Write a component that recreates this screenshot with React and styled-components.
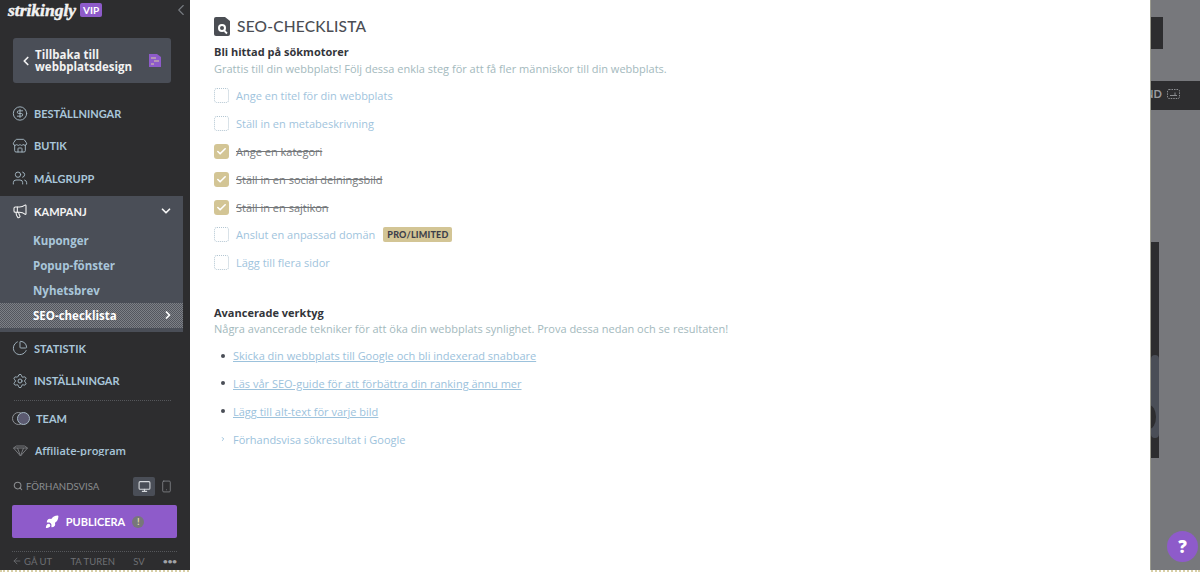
import styled, { createGlobalStyle } from 'styled-components'
import {
  ArrowLeft, ChartPie, Check, ChevronDown, ChevronLeft, ChevronRight, CircleDollarSign,
  Megaphone, Monitor, Rocket, Search, Settings, Smartphone, Store, Users,
} from 'lucide-react'

const GlobalStyle = createGlobalStyle`
html, body {
  margin: 0;
  padding: 0;
  height: 572px;
  overflow: hidden;
  background: #fff;
}
`

const Page = styled.div`
display: flex;
width: 1200px;
height: 570px;
border-bottom: 2px dotted #d8cfa6;
font-family: "Open Sans", "Liberation Sans", sans-serif;
`

const Sidebar = styled.aside`
display: flex;
flex-direction: column;
width: 190px;
height: 570px;
flex-shrink: 0;
background: #2d2d2f;
color: #a9c6da;
`

const Logo = styled.div`
display: flex;
align-items: center;
height: 20px;
padding: 0 0 0 8px;
`

const LogoText = styled.span`
font-family: "Liberation Serif", serif;
font-weight: 700;
font-style: italic;
font-size: 17.5px;
color: #f2f2f2;
-webkit-text-stroke: 0.5px #f2f2f2;
width: 72px;
`

const VipBadge = styled.span`
font-family: "Lato", sans-serif;
font-size: 10px;
font-weight: 700;
color: #fff;
background: #8e5bca;
border-radius: 2px;
padding: 1px 3px;
`

const Collapse = styled.span`
display: flex;
margin-left: auto;
color: #777b80;
`

const BackButton = styled.button`
display: flex;
align-items: center;
width: 158px;
height: 45px;
margin: 18px 0 0 13px;
padding: 0 10px 0 6px;
border: 0;
border-radius: 3px;
background: #4a4e57;
color: #f2f2f2;
font-family: "Open Sans", sans-serif;
font-weight: 700;
font-size: 11.5px;
line-height: 11.5px;
text-align: left;
`

const BackLabel = styled.span`
margin-left: 2px;
flex: 1;
`

const NavScroll = styled.nav`
display: flex;
flex-direction: column;
height: 359px;
margin-top: 14px;
overflow: hidden;
`

const NavItem = styled.div`
display: flex;
align-items: center;
flex-shrink: 0;
height: ${p => p.$h || 32.5}px;
padding-left: 12px;
gap: 6px;
font-family: "Lato", sans-serif;
font-weight: 700;
font-size: 11px;
color: ${p => p.$light ? '#f4f4f4' : '#a9c6da'};
`

const IconSlot = styled.span`
display: flex;
justify-content: center;
width: 16px;
color: ${p => p.$light ? '#f4f4f4' : '#a6b8c4'};
`

const Campaign = styled.div`
display: flex;
flex-direction: column;
flex-shrink: 0;
width: 183px;
height: 136px;
margin-top: 1.5px;
background: #4a4e57;
`

const CampaignHead = styled(NavItem)`
margin-bottom: 1.5px;
`

const CampaignChevron = styled.span`
display: flex;
margin-left: auto;
margin-right: 10px;
`

const SubItem = styled.div`
display: flex;
align-items: center;
flex-shrink: 0;
height: 25px;
padding: 0 9px 0 33px;
font-weight: 700;
font-size: 11.5px;
color: ${p => p.$active ? '#fff' : '#a9c6da'};
background: ${p => p.$active ? 'repeating-conic-gradient(#53565e 0 25%, #7d8086 0 50%) 0 0 / 2px 2px' : 'transparent'};
justify-content: space-between;
`

const Divider = styled.div`
flex-shrink: 0;
width: 157px;
margin: 3px 0 1px 14px;
border-top: 1px dotted #55575b;
`

const AffiliateLabel = styled.span`
font-family: "Open Sans", sans-serif;
font-weight: 600;
`

const PreviewRow = styled.div`
display: flex;
align-items: center;
height: 24px;
margin-top: 18px;
padding-left: 13px;
font-family: "Lato", sans-serif;
font-size: 9.6px;
color: #8b8d90;
`

const PreviewLabel = styled.span`
margin-left: 3px;
flex: 1;
`

const DeviceButton = styled.span`
display: flex;
align-items: center;
justify-content: center;
width: 22px;
height: 19px;
margin-right: ${p => p.$last ? '13px' : '0'};
border-radius: 2px;
background: ${p => p.$active ? '#4a4e57' : 'transparent'};
color: ${p => p.$active ? '#d5d8dc' : '#85888c'};
`

const PublishButton = styled.button`
display: flex;
align-items: center;
justify-content: center;
gap: 7px;
width: 165px;
height: 33px;
margin: 7px 0 0 12px;
padding: 0;
border: 0;
border-radius: 2px;
background: #8e5bca;
color: #fff;
font-family: "Lato", sans-serif;
font-weight: 700;
font-size: 11px;
`

const Warning = styled.span`
display: flex;
align-items: center;
justify-content: center;
width: 12px;
height: 12px;
border-radius: 50%;
background: #77777a;
color: #e6dca8;
font-size: 9px;
font-weight: 700;
`

const BottomBar = styled.div`
display: flex;
align-items: center;
justify-content: space-between;
height: 18px;
margin: 13px 13px 0 12px;
border-top: 1px dotted #55575b;
font-family: "Lato", sans-serif;
font-size: 9.5px;
color: #6e7074;
`

const BackOut = styled.span`
display: flex;
align-items: center;
gap: 2px;
`

const Dots = styled.span`
font-weight: 900;
font-size: 8px;
color: #a0a2a6;
`

const Modal = styled.main`
width: 936px;
height: 570px;
padding: 13px 0 0 24px;
flex-shrink: 0;
background: #fff;
`

const TitleRow = styled.div`
display: flex;
align-items: center;
gap: 7px;
height: 26px;
`

const Title = styled.h1`
margin: 0;
font-family: "Lato", sans-serif;
font-weight: 500;
font-size: 15.5px;
letter-spacing: 0.2px;
color: #4b4e54;
`

const SectionTitle = styled.h2`
margin: ${p => p.$top || 0}px 0 0;
font-size: 11px;
line-height: 17px;
font-weight: 700;
color: #33353a;
`

const SectionText = styled.p`
margin: 0;
font-size: 11px;
line-height: ${p => p.$lh || 17}px;
color: #a3b9bd;
`

const CheckList = styled.ul`
display: flex;
flex-direction: column;
margin: 5px 0 0;
padding: 0;
list-style: none;
`

const CheckRow = styled.li`
display: flex;
align-items: center;
height: 27.8px;
gap: 7px;
font-size: 11px;
color: ${p => p.$done ? '#74777a' : '#9fc4dd'};
text-decoration: ${p => p.$done ? 'line-through' : 'none'};
`

const CheckBox = styled.span`
display: flex;
align-items: center;
justify-content: center;
width: 15px;
height: 15px;
box-sizing: border-box;
border-radius: 3px;
border: ${p => p.$done ? '0' : '1px dotted #b3c6d2'};
background: ${p => p.$done ? '#d3c595' : 'transparent'};
color: #fff;
`

const ProBadge = styled.span`
margin-left: 1px;
padding: 2px 4px;
border-radius: 2px;
background: #d3c595;
color: #3d3f4a;
font-family: "Lato", sans-serif;
font-size: 9px;
line-height: 11px;
font-weight: 900;
letter-spacing: 0.2px;
`

const ToolList = styled.ul`
display: flex;
flex-direction: column;
margin: 5px 0 0;
padding: 0;
list-style: none;
`

const ToolRow = styled.li`
display: flex;
align-items: center;
height: 27.9px;
padding-left: 6px;
gap: 7px;
font-size: 11px;
color: #9cc2dc;
`

const Bullet = styled.span`
width: 4px;
height: 4px;
margin: 0 1px;
border-radius: 50%;
background: #4a4e57;
`

const ToolLink = styled.a`
color: #9cc2dc;
text-decoration: underline;
`

const ToolChevron = styled.span`
display: flex;
width: 6px;
color: #9cc2dc;
`

const Backdrop = styled.div`
position: relative;
flex: 1;
border-left: 1px solid #9a9a8e;
background: #77787c;
`

const Block = styled.div`
position: absolute;
left: 0;
top: ${p => p.$top}px;
width: ${p => p.$w}px;
height: ${p => p.$h}px;
overflow: hidden;
border-radius: ${p => p.$round || 0}px;
background: ${p => p.$bg || '#2d2d2f'};
`

const CutLabel = styled.span`
position: absolute;
left: -6px;
top: 6px;
display: flex;
align-items: center;
gap: 5px;
font-family: "Lato", sans-serif;
font-weight: 700;
font-size: 11px;
color: #9a9ca0;
`

const DarkArc = styled.div`
position: absolute;
left: -9px;
top: 50px;
width: 14px;
height: 24px;
border-radius: 50%;
background: #2d2d2f;
`

const HelpButton = styled.button`
position: absolute;
left: 16px;
top: 531px;
width: 31px;
height: 31px;
padding: 0;
border: 0;
border-radius: 50%;
background: #8e5bca;
color: #fff;
font-family: "Open Sans", sans-serif;
font-weight: 800;
font-size: 17px;
`

const checklist = [
  { text: 'Ange en titel för din webbplats' },
  { text: 'Ställ in en metabeskrivning' },
  { text: 'Ange en kategori', done: true },
  { text: 'Ställ in en social delningsbild', done: true },
  { text: 'Ställ in en sajtikon', done: true },
  { text: 'Anslut en anpassad domän', badge: 'PRO/LIMITED' },
  { text: 'Lägg till flera sidor' },
]

const tools = [
  'Skicka din webbplats till Google och bli indexerad snabbare',
  'Läs vår SEO-guide för att förbättra din ranking ännu mer',
  'Lägg till alt-text för varje bild',
]

const SeoIcon = () => (
  <svg width="16" height="19" viewBox="0 0 16 19">
    <path d="M0 2q0-2 2-2h9l5 4v13q0 2-2 2H2q-2 0-2-2z" fill="#4b4e54" />
    <circle cx="8" cy="11" r="4" fill="#fff" />
    <circle cx="8" cy="11" r="2" fill="#4b4e54" />
    <path d="M10.5 14l2.5 2.5" stroke="#fff" strokeWidth="1.8" />
  </svg>
)

const DesignIcon = () => (
  <svg width="12" height="13" viewBox="0 0 12 13">
    <path d="M0 0h8l4 3v10H0z" fill="#8e5bca" />
    <path d="M2 4h5M5 7h5M2 10h3" stroke="#d9d0a0" strokeWidth="1" />
  </svg>
)

const TeamIcon = () => (
  <svg width="18" height="13" viewBox="0 0 18 13" fill="none">
    <circle cx="6.5" cy="6.5" r="6" stroke="#8d9096" />
    <circle cx="11.5" cy="6.5" r="6" fill="#5b5a70" stroke="#a6b8c4" />
  </svg>
)

const AffiliateIcon = () => (
  <svg width="17" height="12" viewBox="0 0 16 12" fill="none" stroke="#77797d">
    <path d="M1 3l3-2h8l3 2-7 8zM1 3h14M5 3l3 8 3-8" />
  </svg>
)

const TrayIcon = () => (
  <svg width="13" height="10" viewBox="0 0 13 10" fill="none" stroke="#8b8d90">
    <rect x="0.5" y="0.5" width="12" height="9" rx="1.5" strokeDasharray="1.5 1" />
    <path d="M3 6.5h7M8 3.5v3" />
  </svg>
)

const App = () => {
  return (
    <Page>
      <GlobalStyle />
      <Sidebar>
        <Logo>
          <LogoText>strikingly</LogoText>
          <VipBadge>VIP</VipBadge>
          <Collapse><ChevronLeft size={18} strokeWidth={1.5} /></Collapse>
        </Logo>
        <BackButton>
          <ChevronLeft size={14} strokeWidth={3} />
          <BackLabel>Tillbaka till webbplatsdesign</BackLabel>
          <DesignIcon />
        </BackButton>
        <NavScroll>
          <NavItem><IconSlot><CircleDollarSign size={17} strokeWidth={1.4} /></IconSlot>BESTÄLLNINGAR</NavItem>
          <NavItem><IconSlot><Store size={16} strokeWidth={1.4} /></IconSlot>BUTIK</NavItem>
          <NavItem><IconSlot><Users size={16} strokeWidth={1.4} /></IconSlot>MÅLGRUPP</NavItem>
          <Campaign>
            <CampaignHead $light $h={30}>
              <IconSlot $light><Megaphone size={16} strokeWidth={1.6} /></IconSlot>
              KAMPANJ
              <CampaignChevron><ChevronDown size={14} strokeWidth={3} /></CampaignChevron>
            </CampaignHead>
            <SubItem>Kuponger</SubItem>
            <SubItem>Popup-fönster</SubItem>
            <SubItem>Nyhetsbrev</SubItem>
            <SubItem $active>SEO-checklista<ChevronRight size={12} strokeWidth={3.5} /></SubItem>
          </Campaign>
          <NavItem><IconSlot><ChartPie size={16} strokeWidth={1.4} /></IconSlot>STATISTIK</NavItem>
          <NavItem><IconSlot><Settings size={16} strokeWidth={1.4} /></IconSlot>INSTÄLLNINGAR</NavItem>
          <Divider />
          <NavItem>
            <TeamIcon />
            TEAM
          </NavItem>
          <NavItem>
            <AffiliateIcon />
            <AffiliateLabel>Affiliate-program</AffiliateLabel>
          </NavItem>
        </NavScroll>
        <PreviewRow>
          <Search size={10} strokeWidth={2.5} />
          <PreviewLabel>FÖRHANDSVISA</PreviewLabel>
          <DeviceButton $active><Monitor size={13} strokeWidth={2} /></DeviceButton>
          <DeviceButton $last><Smartphone size={13} strokeWidth={1.5} /></DeviceButton>
        </PreviewRow>
        <PublishButton>
          <Rocket size={14} fill="#fff" />
          PUBLICERA
          <Warning>!</Warning>
        </PublishButton>
        <BottomBar>
          <BackOut><ArrowLeft size={10} />GÅ UT</BackOut>
          <span>TA TUREN</span>
          <span>SV</span>
          <Dots>•••</Dots>
        </BottomBar>
      </Sidebar>
      <Modal>
        <TitleRow>
          <SeoIcon />
          <Title>SEO-CHECKLISTA</Title>
        </TitleRow>
        <SectionTitle $top={4}>Bli hittad på sökmotorer</SectionTitle>
        <SectionText>Grattis till din webbplats! Följ dessa enkla steg för att få fler människor till din webbplats.</SectionText>
        <CheckList>
          {checklist.map(item => (
            <CheckRow key={item.text} $done={item.done}>
              <CheckBox $done={item.done}>{item.done && <Check size={11} strokeWidth={3.5} />}</CheckBox>
              {item.text}
              {item.badge && <ProBadge>{item.badge}</ProBadge>}
            </CheckRow>
          ))}
        </CheckList>
        <SectionTitle $top={27}>Avancerade verktyg</SectionTitle>
        <SectionText $lh={16}>Några avancerade tekniker för att öka din webbplats synlighet. Prova dessa nedan och se resultaten!</SectionText>
        <ToolList>
          {tools.map(tool => (
            <ToolRow key={tool}>
              <Bullet />
              <ToolLink>{tool}</ToolLink>
            </ToolRow>
          ))}
          <ToolRow>
            <ToolChevron><ChevronRight size={10} strokeWidth={4} /></ToolChevron>
            Förhandsvisa sökresultat i Google
          </ToolRow>
        </ToolList>
      </Modal>
      <Backdrop>
        <Block $top={17} $w={12} $h={32} />
        <Block $top={81} $w={50} $h={29}>
          <CutLabel>ND <TrayIcon /></CutLabel>
        </Block>
        <Block $top={242} $w={8} $h={216} />
        <Block $top={355} $w={8} $h={83} $bg="#4a4e57" $round={4}>
          <DarkArc />
        </Block>
        <HelpButton>?</HelpButton>
      </Backdrop>
    </Page>
  )
}

export default App
